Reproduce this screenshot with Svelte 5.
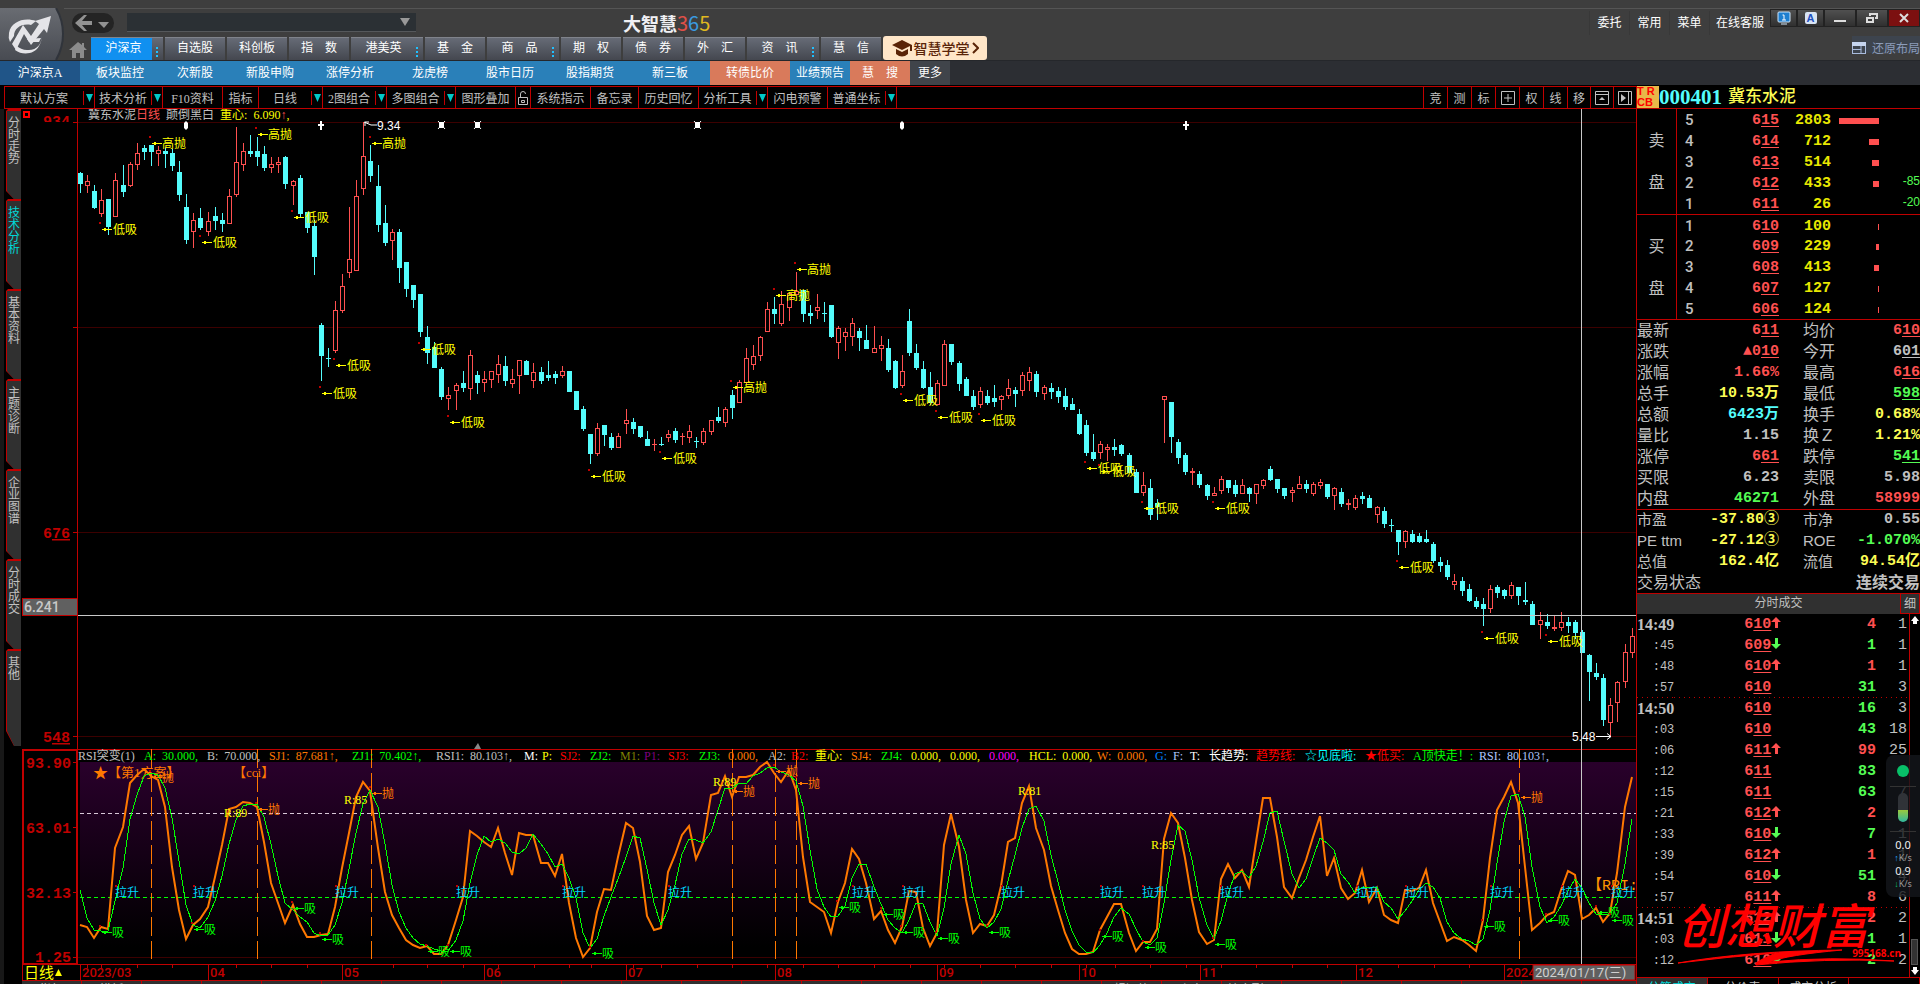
<script lang="ts">
    type NavItem = { text: string; more?: boolean; active?: boolean };

    const mainNav: NavItem[] = [
        {text: '沪深京', more: true, active: true}, {text: '自选股'}, {text: '科创板'}, {text: '指　数'},
        {text: '港美英', more: true}, {text: '基　金'}, {text: '商　品', more: true}, {text: '期　权'},
        {text: '债　券'}, {text: '外　汇'}, {text: '资　讯', more: true}, {text: '慧　信'},
    ];

    const subNav = [
        ['沪深京A', 'current'], ['板块监控', ''], ['次新股', 'mid'], ['新股申购', ''], ['涨停分析', ''],
        ['龙虎榜', ''], ['股市日历', ''], ['股指期货', ''], ['新三板', ''], ['转债比价', 'hot'],
        ['业绩预告', 'short'], ['慧　搜', 'short hot'], ['更多', 'rest'],
    ];

    const tools = [
        {text: '默认方案', w: 90, drop: true}, {text: '技术分析', w: 68, drop: true}, {text: 'F10资料', w: 60},
        {text: '指标', w: 36}, {text: '日线', w: 64, drop: true}, {text: '2图组合', w: 64, drop: true},
        {text: '多图组合', w: 69, drop: true}, {text: '图形叠加', w: 60}, {text: 'lock', w: 15},
        {text: '系统指示', w: 60}, {text: '备忘录', w: 48}, {text: '历史回忆', w: 60},
        {text: '分析工具', w: 69, drop: true}, {text: '闪电预警', w: 60}, {text: '普通坐标', w: 69, drop: true},
    ];
    const rightTools = ['竞', '测', '标', 'grid', '权', '线', '移', 'up', 'next'];
    const sideTabs = ['分时走势', '技术分析', '基本资料', '主题诊断', '企业图谱', '分时成交', '其他'];
    let activeSide = $state('技术分析');

    const sells = [['5', '615', 2803, 40], ['4', '614', 712, 10], ['3', '613', 514, 7], ['2', '612', 433, 6, '-85'], ['1', '611', 26, 0, '-20']];
    const buys = [['1', '610', 100, 1], ['2', '609', 229, 3], ['3', '608', 413, 5], ['4', '607', 127, 1], ['5', '606', 124, 1]];

    // label, value, colour; a leading "_" marks a price with its decimals underlined
    const quote = [
        ['最新', '_611', 'r', '均价', '_610', 'r'],
        ['涨跌', '▲_010', 'r', '今开', '_601', 'w'],
        ['涨幅', '1.66%', 'r', '最高', '_616', 'r'],
        ['总手', '10.53万', 'y', '最低', '_598', 'g'],
        ['总额', '6423万', 'c', '换手', '0.68%', 'y'],
        ['量比', '1.15', 'w', '换Ｚ', '1.21%', 'y'],
        ['涨停', '_661', 'r', '跌停', '_541', 'g'],
        ['买限', '6.23', 'w', '卖限', '5.98', 'w'],
        ['内盘', '46271', 'g', '外盘', '58999', 'r'],
    ];
    const finance = [
        ['市盈', '-37.80③', 'y', '市净', '0.55', 'w'],
        ['PE ttm', '-27.12③', 'y', 'ROE', '-1.070%', 'g'],
        ['总值', '162.4亿', 'y', '流值', '94.54亿', 'y'],
    ];

    const ticks = [
        ['14:49', '610', 'up', 4, 'r', 1], [':45', '609', 'down', 1, 'g', 1], [':48', '610', 'up', 1, 'r', 1],
        [':57', '610', '', 31, 'g', 3], ['14:50', '610', '', 16, 'g', 3], [':03', '610', '', 43, 'g', 18],
        [':06', '611', 'up', 99, 'r', 25], [':12', '611', '', 83, 'g', 6], [':15', '611', '', 63, 'g', 7],
        [':21', '612', 'up', 2, 'r', 9], [':33', '610', 'down', 7, 'g', 1], [':39', '612', 'up', 1, 'r', 1],
        [':54', '610', 'down', 51, 'g', 4], [':57', '611', 'up', 8, 'r', 6], ['14:51', '612', 'up', 2, 'r', 2],
        [':03', '611', 'down', 1, 'g', 1], [':12', '610', 'down', 2, 'g', 2],
    ];

    // One bar per entry: colour, high, body top, body bottom, low
    const bars = `c172 173 184 193,r175 181 186 193,c185 191 208 209,r189 200 214 217,c199 199 227 235,r173 180 217 217,c165 185 192 197,r162 164 186 187,r143 153 165 170,c145 148 152 160
,c145 145 152 166,r146 150 154 166,c147 151 154 168,c149 153 166 171,c161 172 195 201,c194 207 240 244,r213 220 232 248,c208 218 228 230,r212 221 232 236,c207 216 221 230
,c213 220 224 232,r189 196 224 224,r127 162 195 197,r143 151 165 171,c135 151 154 157,c137 151 157 166,c146 154 168 171,r157 164 168 173,r157 162 165 173,c156 157 184 189
,r180 181 186 205,c175 178 214 217,c212 212 228 233,c220 226 257 275,c323 325 356 381,c348 358 359 367,r301 310 351 353,r274 286 311 313,r207 259 273 278,r180 196 271 271
,r122 156 189 195,c145 161 176 182,c165 186 225 232,c205 223 243 246,r229 232 241 260,c229 232 268 283,c262 262 289 297,c285 285 300 308,c294 294 332 337,c326 337 353 364
,c342 347 368 368,c367 369 397 400,r387 395 399 410,r383 385 391 410,c371 383 388 392,r350 355 389 400,c371 375 383 394,r371 379 383 392,r371 371 380 388,r355 364 375 383
,c356 366 381 386,r369 379 384 388,r360 360 376 394,c360 361 375 375,r363 372 381 388,c367 372 381 384,c361 375 378 381,c371 374 378 384,r366 371 376 378,c371 371 392 392
,c391 391 410 410,c406 409 429 431,c434 434 454 464,r423 428 454 456,c425 425 435 446,c433 437 448 450,r433 436 448 448,r409 420 424 434,c418 422 429 434,c426 426 437 438
,c431 439 446 446,r439 444 445 451,c437 444 445 446,r430 434 438 442,c428 431 440 443,r433 436 437 445,r425 431 438 443,c437 441 442 448,r428 431 443 445,r420 420 432 435
,c407 417 421 423,r407 409 423 427,c390 395 408 419,r380 382 403 403,r348 358 383 384,r345 356 365 370,r336 337 356 361,r302 309 332 332,c297 309 314 324,r291 304 324 326
,r292 293 308 321,r272 291 295 295,c290 290 314 322,c305 313 316 324,r294 307 311 319,c302 313 314 322,c305 305 337 338,r326 328 343 359,r328 332 337 351,r318 323 337 346
,c328 331 338 351,c325 340 349 349,r326 348 353 353,r336 345 349 361,c339 348 370 372,c360 361 388 389,r355 371 386 388,c309 321 353 356,c344 353 368 370,c361 369 388 389
,c372 387 403 405,r380 383 405 405,r340 344 386 386,c344 344 362 365,c361 363 384 391,c377 379 396 396,c390 396 407 410,r387 391 405 408,c390 396 403 405,c385 398 402 407
,r395 396 400 410,r379 388 396 399,c387 390 394 407,r372 375 391 396,r367 372 381 391,c371 374 392 397,r385 387 394 400,c383 388 392 399,c387 391 397 403,c388 396 407 410
,c398 404 410 410,c409 414 434 435,c420 425 453 456,c434 452 459 461,r441 444 453 459,r444 447 450 461,c439 447 450 456,c444 445 454 456,c453 455 473 473,c469 472 493 493
,r472 485 493 496,c479 488 515 520,c499 503 507 520,r396 396 400 443,c402 402 437 453,c439 442 458 464,c453 455 472 475,r468 471 473 485,c471 474 485 488,c484 485 496 500
,r487 493 496 496,r476 479 491 494,c480 480 488 493,c480 485 494 497,r479 485 494 494,c487 488 494 502,r484 484 494 504,r479 480 486 489,c466 469 480 481,c479 479 489 493
,c488 488 496 499,r487 490 493 502,r476 484 489 489,c480 484 489 493,r482 484 494 496,r479 482 486 489,c484 484 497 499,r487 488 496 510,c488 492 504 507,r499 503 505 510
,r495 498 508 510,c492 496 499 504,c495 498 508 508,r506 507 515 523,c507 511 524 528,c519 525 526 532,c530 530 542 555,r530 531 542 548,c530 534 542 543,c533 536 542 543
,c530 539 542 543,c542 544 561 563,c557 562 566 572,c560 565 577 580,r574 581 585 590,c577 581 591 596,c584 589 601 602,c597 601 607 609,c598 604 609 626,r585 589 609 613
,c585 587 593 598,c589 590 596 599,r582 585 596 599,c587 587 596 605,c582 600 602 605,c601 604 625 625,r612 620 625 639,c614 622 626 629,r616 627 629 631,r612 622 628 631
,c617 622 626 633,c620 622 633 639,c630 632 653 653,c654 655 672 701,c663 673 677 680,c674 678 720 726,r698 705 723 737,r681 682 703 722,r644 652 682 688,r628 636 653 658`;

    const barX = (i: number) => Math.round(80 + i * 7.085);
    const candles = bars.replace(/\s*\n/g, '').split(',').map((s, i) => {
        const [high, top, bottom, low] = s.slice(1).split(' ').map(Number);
        return {x: barX(i), up: s[0] === 'r', high, top, bottom, low};
    });

    const rsi = [
        925, 927, 938, 927, 929, 848, 827, 783, 775, 769, 776, 780, 807, 867, 910, 939, 925, 919, 907, 877,
        845, 809, 807, 802, 803, 807, 842, 883, 903, 923, 905, 924, 937, 937, 935, 934, 907, 868, 833, 797,
        782, 791, 848, 892, 915, 928, 940, 945, 948, 946, 954, 954, 945, 920, 897, 831, 836, 842, 847, 828,
        853, 875, 833, 835, 835, 863, 863, 876, 854, 903, 938, 957, 948, 912, 889, 890, 857, 823, 828, 862,
        916, 930, 928, 872, 855, 835, 826, 859, 843, 795, 793, 776, 797, 777, 777, 775, 767, 762, 773, 782,
        770, 790, 857, 902, 907, 912, 933, 902, 883, 849, 859, 883, 919, 911, 930, 943, 927, 891, 892, 928,
        946, 933, 845, 814, 847, 900, 933, 924, 926, 915, 886, 842, 838, 803, 786, 828, 850, 886, 910, 933,
        949, 954, 954, 952, 930, 917, 904, 904, 933, 951, 942, 942, 929, 839, 813, 823, 858, 900, 932, 944,
        940, 879, 864, 878, 870, 887, 842, 798, 798, 837, 887, 898, 878, 860, 837, 816, 876, 858, 888, 899,
        893, 870, 902, 888, 915, 920, 923, 890, 891, 888, 870, 903, 922, 941, 937, 940, 945, 951, 920, 858,
        810, 797, 782, 803, 867, 930, 923, 915, 912, 890, 871, 875, 919, 915, 908, 922, 913, 873, 807, 777,
    ];
    // The slow line is the three-bar mean of the fast one
    const slow = rsi.map((v, i) => (i === 0 ? 890 : i === 1 ? 918 : Math.round((v + rsi[i - 1] + rsi[i - 2]) / 3)));
    const line = (ys: number[]) => ys.map((y, i) => `${barX(i)},${y}`).join(' ');

    const highs = [[151, 143], [257, 134], [371, 143], [732, 387], [775, 295], [796, 269]];
    const lows = [
        [101, 229], [201, 242], [293, 217], [335, 365], [321, 393], [420, 349], [449, 422], [590, 476], [661, 458],
        [902, 400], [937, 417], [980, 420], [1086, 468], [1100, 471], [1143, 508], [1214, 508], [1398, 567], [1483, 638], [1547, 641],
    ];
    const rises = [115, 193, 335, 456, 562, 668, 852, 902, 1001, 1100, 1142, 1220, 1356, 1405, 1490, 1561, 1611];
    const absorbs = [
        [101, 932], [193, 929], [293, 908], [321, 939], [427, 951], [449, 951], [591, 953], [838, 907], [882, 914], [902, 932],
        [937, 938], [988, 932], [1101, 936], [1144, 947], [1214, 944], [1483, 926], [1547, 920], [1597, 912], [1611, 920],
    ];
    const throws = [[151, 777], [257, 809], [371, 793], [732, 791], [775, 771], [797, 783], [1520, 797]];
    const peaks: [number, number, string][] = [[224, 817, 'R:89'], [344, 804, 'R:85'], [713, 786, 'R:89'], [1018, 795, 'R:81'], [1151, 849, 'R:85']];
    const signals = [151, 257, 371, 732, 775, 796, 1519];

    const legend: [number, string, string][] = [
        [78, 'RSI突变(1)', '#c0c0c0'], [144, 'A:  30.000,', '#0f0'], [207, 'B:  70.000,', '#c0c0c0'], [269, 'SJ1:  87.681↑,', '#ff7800'],
        [352, 'ZJ1:  70.402↑,', '#0f0'], [436, 'RSI1:  80.103↑,', '#c0c0c0'], [524, 'M:', '#fff'], [542, 'P:', '#ff0'], [560, 'SJ2:', '#f00'],
        [590, 'ZJ2:', '#0f0'], [620, 'M1:', '#808000'], [644, 'P1:', '#800080'], [668, 'SJ3:', '#f00'], [699, 'ZJ3:', '#0f0'],
        [728, '0.000,', '#ff7800'], [768, 'A2:', '#c0c0c0'], [791, 'B2:', '#f00'], [815, '重心:', '#ff0'], [851, 'SJ4:', '#ff7800'],
        [881, 'ZJ4:', '#0f0'], [911, '0.000,', '#ff0'], [950, '0.000,', '#ff0'], [989, '0.000,', '#f0f'], [1029, 'HCL:  0.000,', '#ff0'],
        [1097, 'W:  0.000,', '#ff7800'], [1155, 'G:', '#0080ff'], [1173, 'F:', '#b0c8ff'], [1190, 'T:', '#fff'], [1209, '长趋势:', '#fff'],
        [1256, '趋势线:', '#f00'], [1305, '☆见底啦:', '#0ff'], [1365, '★低买:', '#f00'], [1413, 'A顶快走！:', '#0f0'], [1479, 'RSI:  80.103↑,', '#b0c8ff'],
    ];

    const months: [number, string][] = [
        [80, '2023/03'], [208, '04'], [342, '05'], [484, '06'], [626, '07'], [775, '08'], [937, '09'],
        [1079, '10'], [1200, '11'], [1356, '12'], [1504, '2024'],
    ];
    const weeks = [
        87, 101, 137, 172, 236, 271, 307, 393, 427, 463, 498, 534, 569, 591, 633, 661, 697, 732, 767, 803, 838, 874, 910,
        944, 980, 1015, 1051, 1086, 1115, 1150, 1186, 1221, 1256, 1292, 1327, 1398, 1434, 1469,
    ];
    const strip = ['指标', '模板', ...Array(16).fill(''), '超短势', '主力', '控盘副图', ...Array(6).fill('')];
</script>

{#snippet price(v: string)}{#if v.includes('_')}{v.split('_')[0]}{v.split('_')[1][0]}<u>{v.split('_')[1].slice(1)}</u>{:else}{v}{/if}{/snippet}

{#snippet depth(rows: any[], side: string)}
    <div class="depth">
        <div class="side"><span>{side}</span><span>盘</span></div>
        <div class="levels">
            {#each rows as [n, p, vol, w, diff]}
                <div class="level">
                    <b class="n">{n}</b>
                    <span class="r num">{@render price('_' + p)}</span>
                    <span class="vol num">{vol}</span>
                    <span class="bar"><i style:width="{w}px"></i></span>
                    <span class="diff">{diff ?? ''}</span>
                </div>
            {/each}
        </div>
    </div>
{/snippet}

{#snippet arrow(x: number, y: number)}
    <path d="M{x + 1} {y + .5}h10M{x + 3.5} {y - 1}v3M{x + 4.5} {y - 1}v3" stroke="currentColor" fill="none" shape-rendering="crispEdges" />
    <rect x={x - 2} y={y - 7} width="2" height="2" fill="#c00000" />
{/snippet}

<div class="app">
    <header>
        <a class="logo" href="#home" aria-label="大智慧">
            <svg width="64" height="52" viewBox="0 0 64 52">
                <defs><linearGradient id="lg" x2="0" y2="1"><stop stop-color="#696c72" /><stop offset="1" stop-color="#484b52" /></linearGradient></defs>
                <path d="M0 0h56q7 12 7 26t-7 26H0z" fill="url(#lg)" />
                <path d="M56 0q7 12 7 26t-7 26" fill="none" stroke="#30343b" stroke-width="2" />
                <g fill="#e4e4e8">
                    <path d="M51 8 47 25 44 21 31 37 24 26 16 42 12 36 23 17 31 28 39 16 35 13z" />
                    <path d="M36 13C25 9 11 13 9 25q-1 5 1 9l4-6c0-8 8-13 17-11z" />
                    <path d="M41 27c2 9-5 16-14 15-4 0-8-2-10-4l-2 4c8 6 20 4 24-4 2-3 3-7 2-11z" />
                    <path d="m27 31 14-1-2 4H29z" />
                </g>
            </svg>
        </a>
        <div class="head-main">
            <div class="title-row">
                <button class="back" aria-label="后退">
                    <svg width="42" height="20" viewBox="0 0 42 20"><path d="M3 10 12 2h3l-5 6h10v4H10l5 6h-3z" fill="#929292" /><path d="M26 9h11l-5 6z" fill="#929292" /></svg>
                </button>
                <div class="search">
                    <input type="text" aria-label="搜索" />
                    <button aria-label="展开"><svg width="10" height="8"><path d="M0 0h10L5 8z" fill="#999" /></svg></button>
                </div>
                <h1>大智慧<span class="d3">3</span><span class="d6">6</span><span class="d5">5</span></h1>
                <nav class="menu">
                    <a href="#trade">委托</a><a href="#common">常用</a><a href="#menu">菜单</a><a class="wide" href="#service">在线客服</a>
                </nav>
                <div class="win">
                    <button class="sm" aria-label="屏幕"><svg width="14" height="14"><rect x="1" y="1" width="12" height="10" rx="1" fill="#1e7fd0" stroke="#cfe6fa" /><path d="M5.500 4H7v5M5 9h4" stroke="#fff" fill="none" /><path d="M4 13h6" stroke="#cfe6fa" /></svg></button>
                    <button class="sm" aria-label="字体"><span class="glyph">A</span></button>
                    <button aria-label="最小化"><svg width="12" height="10"><path d="M0 8h12" stroke="#ddd" stroke-width="2" /></svg></button>
                    <button aria-label="还原"><svg width="12" height="10"><path d="M4 3V1h7v4H9M1 5h6v4H1z" stroke="#ddd" fill="none" stroke-width="2" /></svg></button>
                    <button class="close" aria-label="关闭"><svg width="10" height="10"><path d="m1 1 8 8m0-8-8 8" stroke="#ddd" stroke-width="2" /></svg></button>
                </div>
            </div>
            <div class="nav-row">
                <a class="home" href="#index" aria-label="首页">
                    <svg width="18" height="16"><path d="M9 0 0 8h3v8h4v-5h4v5h4V8h3l-3-3V1h-2v2z" fill="#8c8c8c" /></svg>
                </a>
                <nav class="main-nav">
                    {#each mainNav as item}
                        <a href="#nav" class:active={item.active} class:more={item.more}><span>{item.text}</span>{#if item.more}<i aria-hidden="true"></i>{/if}</a>
                    {/each}
                </nav>
                <button class="school">
                    <svg width="20" height="18"><path d="M10 1 0 6l10 5 8-4v5h2V6z" fill="#5a2408" /><path d="M4 10v5q6 5 12 0v-5l-6 3z" fill="#5a2408" /></svg>
                    智慧学堂<svg width="7" height="12"><path d="m1 1 5 5-5 5" fill="none" stroke="#5a2408" stroke-width="2" /></svg>
                </button>
                <button class="restore">
                    <svg width="14" height="12"><rect x=".5" y=".5" width="13" height="11" fill="none" stroke="#a9bbdc" /><rect width="14" height="4" fill="#c5d4ee" /><path d="M1 7.500h8V4M9 11V7" stroke="#a9bbdc" fill="none" /></svg>
                    还原布局
                </button>
            </div>
        </div>
    </header>

    <nav class="sub-nav">
        {#each subNav as [text, kind]}
            <a class={kind} href="#sub">{text}</a>
        {/each}
    </nav>

    <main>
        <section class="work">
            <div class="toolbar">
                {#each tools as t}
                    <button style:width="{t.w}px">
                        {#if t.text === 'lock'}
                            <svg class="lock" width="12" height="16" role="img" aria-label="锁定"><path d="M3.500 7V4q0-2.500 2.500-2.500T8.500 4M1.500 7.500h9v7h-9zM4.500 10.500h3v2h-3z" fill="none" stroke="#c0c0c0" /></svg>
                        {:else}
                            <span>{t.text}</span>
                        {/if}
                        {#if t.drop}<i><svg width="7" height="8"><path d="M0 0h7L3.500 8z" fill="#00c8c8" /></svg></i>{/if}
                    </button>
                {/each}
                <div class="right-tools">
                    {#each rightTools as t}
                        <button aria-label={t}>
                            {#if t === 'grid'}
                                <svg width="14" height="14"><path d="M.5.500h13v13H.5zM3 7h8M7 3v8" fill="none" stroke="#c0c0c0" /></svg>
                            {:else if t === 'up'}
                                <svg width="14" height="14"><path d="M.5.500h13v13H.5zM0 3.500h14" fill="none" stroke="#c0c0c0" /><path d="M4 9h6L7 6z" fill="#c0c0c0" /></svg>
                            {:else if t === 'next'}
                                <svg width="14" height="14"><path d="M.5.500h13v13H.5zM10.500 0v14" fill="none" stroke="#c0c0c0" /><path d="M3 3v8l5-4z" fill="#c0c0c0" /></svg>
                            {:else}{t}{/if}
                        </button>
                    {/each}
                </div>
            </div>

            <div class="body">
                <div class="side-tabs">
                    {#each sideTabs as t}
                        <button class:active={activeSide === t} onclick={() => (activeSide = t)}><span>{t}</span></button>
                    {/each}
                </div>

                <div class="charts">
                    <div class="chart-head">
                        <div class="axis-top"><i></i><span>9<u>34</u></span></div>
                        <p>冀东水泥<span class="r">日线</span>&nbsp; 颠倒黑白 &nbsp;<span class="hy">重心:&nbsp; 6.090</span><span class="r">↑</span><span class="hy">,</span></p>
                        <i class="cross"></i>
                    </div>

                    <svg class="plot" viewBox="22 122 1614 627" role="img" aria-label="冀东水泥日线">
                        <g shape-rendering="crispEdges">
                            {#each [122, 327, 532, 736] as y}
                                <path d="M78 {y + .5}H1636" stroke="#3c0000" />
                                <path d="M73 {y + .5}h5" stroke="#c00000" />
                            {/each}
                            {#each candles as c}
                                <path d="M{c.x + .5} {c.high}V{c.low}" stroke={c.up ? '#ff5050' : '#54fcfc'} />
                                {#if c.bottom - c.top < 2}
                                    <path d="M{c.x - 2} {c.top + .5}h5" stroke={c.up ? '#ff5050' : '#54fcfc'} />
                                {:else if c.up}
                                    <rect x={c.x - 1.5} y={c.top + .5} width="4" height={c.bottom - c.top - 1} fill="#000" stroke="#ff5050" />
                                {:else}
                                    <rect x={c.x - 2} y={c.top} width="5" height={c.bottom - c.top} fill="#54fcfc" />
                                {/if}
                            {/each}
                            <path d="M77.500 122V749M22 749.500H1636" stroke="#c00000" fill="none" />
                            <path d="M78 615.500H1636M1581.500 122V749" stroke="#c8c8c8" fill="none" />
                            <rect x="22.5" y="598.5" width="55" height="17" fill="#606060" stroke="#c00000" />
                        </g>
                        <text class="tag" x="24" y="612">6.241</text>
                        <g class="axis">
                            <text x="70" y="538">6<tspan text-decoration="underline">76</tspan></text>
                            <text x="70" y="742">5<tspan text-decoration="underline">48</tspan></text>
                        </g>
                        <g fill="#fff">
                            {#each [186, 902] as x}<path d="M{x} 121l2 2v5l-2 2-2-2v-5z" />{/each}
                            {#each [321, 1186] as x}<path d="M{x - 1} 121h2v3h2v2h-2v4h-2v-4h-2v-2h2z" />{/each}
                            {#each [441, 477, 697] as x}
                                <rect x={x - 2} y="122" width="5" height="6" /><path d="M{x - 3} 121l7 8m0-8-7 8" stroke="#fff" />
                            {/each}
                            <path d="M364 122l7 3h6M365 126v-4h4M1596 736.500h15m-4-3 4 3-4 3" fill="none" stroke="#fff" />
                            <text x="377" y="130" class="white">9.34</text>
                            <text x="1572" y="741" class="white">5.48</text>
                        </g>
                        <g color="#ff0" fill="#ff0">
                            {#each highs as [x, y]}{@render arrow(x, y)}<text x={x + 11} y={y + 5}>高抛</text>{/each}
                            {#each lows as [x, y]}{@render arrow(x, y)}<text x={x + 12} y={y + 5}>低吸</text>{/each}
                        </g>
                        <path d="M474 749l4-6 3 6z" fill="#888" />
                    </svg>

                    <svg class="plot" viewBox="22 749 1614 215" role="img" aria-label="RSI突变">
                        <defs>
                            <linearGradient id="night" x2="0" y2="1"><stop stop-color="#29002b" /><stop offset=".95" stop-color="#000" /></linearGradient>
                        </defs>
                        <rect x="80" y="762" width="1556" height="195" fill="url(#night)" />
                        <g shape-rendering="crispEdges" fill="none">
                            <path d="M78 957.500H1636" stroke="#3c0000" />
                            <path d="M80 813.500H1636" stroke="#d8c8d8" stroke-dasharray="4 3" />
                            <path d="M80 897.500H1636" stroke="#0f0" stroke-dasharray="4 3" />
                            {#each signals as x}<path d="M{x + .5} 749V959" stroke="#ff7800" stroke-dasharray="19 5" />{/each}
                            <path d="M73 762.500h5M73 827.500h5M73 892.500h5M73 957.500h5" stroke="#c00000" />
                            <rect x="23" y="750" width="54" height="214" stroke="#c00000" stroke-width="2" />
                            <path d="M1581.500 749V964" stroke="#c8c8c8" />
                        </g>
                        <g class="axis">
                            <text x="71" y="768">93.90</text><text x="71" y="833">63.01</text><text x="71" y="898">32.13</text><text x="71" y="962">1.25</text>
                        </g>
                        {#each legend as [x, text, color]}<text {x} y="760" fill={color} class="legend">{text}</text>{/each}
                        <g fill="#ff7800"><text x="93" y="778" class="star">★</text><text class="plan" x="108" y="777">【第1方案】</text><text class="plan" x="233" y="777">【cci】</text></g>
                        <text x="1587" y="890" class="rri">【RRI:</text>
                        <polyline points={line(rsi)} fill="none" stroke="#ff7800" stroke-width="2" />
                        <polyline points={line(slow)} fill="none" stroke="#0f0" shape-rendering="crispEdges" />
                        <g fill="#00d8ff">
                            {#each rises as x}<text {x} y="897">拉升</text><rect {x} y="885" width="2" height="2" fill="#c00000" />{/each}
                        </g>
                        <g color="#0f0" fill="#0f0">{#each absorbs as [x, y]}{@render arrow(x, y)}<text x={x + 11} y={y + 5}>吸</text>{/each}</g>
                        <g color="#ff7800" fill="#ff7800">{#each throws as [x, y]}{@render arrow(x, y)}<text x={x + 11} y={y + 5}>抛</text>{/each}</g>
                        {#each peaks as [x, y, text]}<text {x} {y} fill="#ff0" class="legend">{text}</text>{/each}
                    </svg>

                    <svg class="plot" viewBox="22 964 1614 17" role="img" aria-label="日期">
                        <g shape-rendering="crispEdges" stroke="#c00000" fill="none">
                            <path d="M22 964.500H1636M22 980.500H1636M22.500 964v17M80.500 964v17" />
                            {#each months as [x]}<path d="M{x + .5} 965v15" />{/each}
                            {#each weeks as x}<path d="M{x + .5} 965v3" />{/each}
                        </g>
                        <text x="24" y="978" class="period">日线</text><path d="M55 976h7l-3.500-7z" fill="#ff0" />
                        {#each months as [x, text]}<text x={x + 2} y="977" class="month">{text}</text>{/each}
                        <rect x="1533" y="965" width="102" height="15" fill="#606060" stroke="#c00000" />
                        <text x="1535" y="977" class="date">2024/01/17(三)</text>
                    </svg>

                    <div class="strip">{#each strip as t}<button>{t}</button>{/each}</div>
                </div>
            </div>
        </section>

        <aside>
            <div class="stock"><span class="badge">T R<br />CB</span><span class="code">000401</span><strong>冀东水泥</strong></div>
            {@render depth(sells, '卖')}
            {@render depth(buys, '买')}
            {#each [quote, finance] as rows, k}
                <div class="quote" class:last={k === 1}>
                    {#each rows as [a, av, ac, b, bv, bc]}
                        <div class="pair">
                            <span class="label">{a}</span><span class="num {ac}">{@render price(av)}</span>
                            <span class="label second">{b}</span><span class="num {bc}">{@render price(bv)}</span>
                        </div>
                    {/each}
                    {#if k === 1}<div class="state"><span>交易状态</span><b>连续交易</b></div>{/if}
                </div>
            {/each}
            <div class="tick-head"><span>分时成交</span><button>细</button></div>
            <div class="ticks">
                <table>
                    <tbody>
                        {#each ticks as [time, p, dir, vol, color, count], i}
                            <tr class:dotted={i === 3 || i === 13}>
                                <td class="time" class:minute={String(time).length > 3}>{time}</td>
                                <td class="tp r">{@render price('_' + p)}{#if dir}<svg class={dir === 'up' ? '' : 'g'} width="10" height="11"><path d={dir === 'up' ? 'M5 0l5 5H7v6H4V5H0z' : 'M5 11l5-5H7V0H4v6H0z'} fill="currentColor" /></svg>{/if}</td>
                                <td class="tv {color}">{vol}</td>
                                <td class="tc">{count}</td>
                            </tr>
                        {/each}
                    </tbody>
                </table>
                <div class="scroll">
                    <button aria-label="上"><svg width="8" height="8"><path d="M4 0l4 5H6v3H2V5H0z" fill="#fff" /></svg></button>
                    <i></i>
                    <button aria-label="下"><svg width="8" height="8"><path d="M4 8l4-5H6V0H2v3H0z" fill="#fff" /></svg></button>
                </div>
                <div class="mark">
                    <span>创想财富</span>
                    <svg width="220" height="20" viewBox="0 0 220 20"><path d="M1 16Q70 4 165 3 110 8 92 15q60-6 125-1-70-3-138 4-4-2 20-12Q50 10 1 16z" fill="red" stroke="red" /></svg>
                    <em>995168.cn</em>
                </div>
                <div class="net">
                    <b class="dot"></b><hr /><b class="pill"></b><hr />
                    <span>0.0</span><small><i class="up">↑</i>K/s</small>
                    <span>0.9</span><small><i class="down">↓</i>K/s</small>
                </div>
            </div>
            <div class="bottom-tabs"><button class="active">分笔成交</button><button>分价表</button><button>成交分析</button><button aria-label="更多"></button></div>
        </aside>
    </main>
</div>

<style>
    :global(body) {
        margin: 0;
        background: #000;
    }

    .app {
        --red: #c00000;
        height: 100vh;
        display: flex;
        flex-direction: column;
        overflow: hidden;
        background: #000;
        color: #c0c0c0;
        font-family: "Liberation Serif", "Noto Sans CJK SC", sans-serif;
        font-size: 12px;
    }

    button, input {
        font: inherit;
        color: inherit;
        background: none;
        border: 0;
        padding: 0;
        margin: 0;
    }

    button {
        cursor: pointer;
        white-space: nowrap;
    }

    a {
        color: inherit;
        text-decoration: none;
    }

    svg {
        display: block;
        flex: none;
    }

    .r { color: #ff5050; }
    .g { color: #54fc54; }
    .y { color: #fcfc54; }
    .c { color: #54fcfc; }
    .w { color: #c0c0c0; }

    /* Window header */
    header {
        display: flex;
        flex: none;
        height: 52px;
        padding-top: 8px;
        background: #3e3e3e;
        border-bottom: 1px solid #25272b;
        color: #fff;
    }

    .head-main {
        flex: 1;
        min-width: 0;
        border-top: 1px solid #555;
    }

    .title-row {
        display: flex;
        align-items: center;
        height: 27px;
        padding-left: 8px;
    }

    .back {
        background: #242424;
        border-radius: 10px;
    }

    .search {
        display: flex;
        align-items: center;
        width: 289px;
        height: 18px;
        margin-left: 13px;
        background: #2b3034;
        border-bottom: 1px solid #55585b;
    }

    .search input {
        flex: 1;
        min-width: 0;
    }

    .search button {
        padding: 0 6px;
    }

    h1 {
        display: flex;
        align-items: center;
        margin: 0 auto 0 207px;
        font: bold 18px/24px "Noto Sans CJK SC", sans-serif;
        color: #f0f0f4;
    }

    h1 span {
        font-size: 20px;
        font-weight: 400;
    }

    .d3 { color: #e05048; }
    .d6 { color: #3a9ae0; }
    .d5 { color: #e0b820; }

    .menu {
        display: flex;
    }

    .menu a {
        width: 39px;
        line-height: 24px;
        text-align: center;
        border-left: 1px solid #383838;
    }

    .menu .wide {
        width: 60px;
    }

    .win {
        display: flex;
        align-self: flex-start;
    }

    .win button {
        display: flex;
        align-items: center;
        justify-content: center;
        width: 32px;
        height: 18px;
        background: linear-gradient(#505050, #303030);
        border: 1px solid #222;
        box-sizing: border-box;
    }

    .win .sm {
        width: 27px;
    }

    .win .close {
        background: #7c1010;
    }

    .glyph {
        width: 12px;
        font: bold 11px/12px "Liberation Sans", sans-serif;
        color: #2050c0;
        background: #d8e4f4;
        border-radius: 2px;
    }

    .nav-row {
        display: flex;
        height: 24px;
    }

    .home {
        display: flex;
        align-items: center;
        justify-content: center;
        width: 27px;
        padding-top: 4px;
    }

    .main-nav {
        display: flex;
        padding-top: 1px;
    }

    .main-nav a {
        display: flex;
        width: 60px;
        margin-right: 2px;
        line-height: 21px;
        text-align: center;
        background: linear-gradient(#666b76, #44474f);
        border-top: 1px solid #80838b;
    }

    .main-nav a span {
        flex: 1;
    }

    .main-nav a.more {
        width: 72px;
    }

    .main-nav a.more i {
        width: 2px;
        height: 10px;
        margin: 9px 5px 0 0;
        background: repeating-linear-gradient(#20c0ff 0 2px, transparent 2px 4px);
    }

    .main-nav a.active {
        gap: 4px;
    }

    .main-nav a.active span {
        padding-left: 4px;
        background: #1090f0;
    }

    .school {
        display: flex;
        align-items: center;
        justify-content: center;
        gap: 2px;
        width: 104px;
        background: #ffe6c8;
        color: #5a2408;
        border-radius: 3px;
        font-size: 14px;
        font-weight: 500;
    }

    .restore {
        display: flex;
        align-items: center;
        gap: 6px;
        margin-left: auto;
        padding-top: 7px;
        height: 17px;
        color: #8c9cba;
        background: #3d444e;
    }

    .sub-nav {
        display: flex;
        flex: none;
        height: 24px;
        margin-bottom: 1px;
        background: #2c2e33;
        color: #fff;
        line-height: 24px;
        text-align: center;
    }

    .sub-nav a {
        width: 80px;
        background: #2a80b9;
    }

    .sub-nav .mid { width: 70px; }
    .sub-nav .current { background: #205588; }
    .sub-nav .short { width: 60px; }
    .sub-nav .hot { background: #d97a5b; }

    .sub-nav .rest {
        width: 40px;
        background: #40444a;
    }

    /* Workspace */
    main {
        display: grid;
        grid-template-columns: minmax(0, 1fr) 284px;
        flex: 1;
        min-height: 0;
    }

    .work {
        display: flex;
        flex-direction: column;
        min-height: 0;
    }

    .toolbar {
        display: flex;
        height: 21px;
        margin-left: 4px;
        border: 1px solid var(--red);
        border-right: 0;
    }

    .toolbar button {
        display: flex;
        align-items: center;
        justify-content: center;
        flex: none;
        box-sizing: border-box;
        border-right: 1px solid var(--red);
    }

    .toolbar span {
        flex: 1;
    }

    .toolbar i {
        display: flex;
        align-items: center;
        justify-content: center;
        width: 10px;
        height: 14px;
        border-left: 1px solid var(--red);
    }

    .right-tools {
        display: flex;
        margin-left: auto;
    }

    .right-tools button {
        width: 24px;
        border-right: 0;
        border-left: 1px solid var(--red);
    }

    .right-tools button:nth-last-child(-n + 3) {
        width: 23px;
    }

    .body {
        display: flex;
        flex: 1;
        min-height: 0;
    }

    .side-tabs {
        width: 22px;
        flex: none;
        box-sizing: border-box;
        padding-left: 6px;
        background: linear-gradient(90deg, #181818 4px, #000 4px);
    }

    .side-tabs button {
        display: block;
        width: 15px;
        height: 90px;
        padding-left: 1px;
        background: var(--red);
        clip-path: polygon(0 2px, 2px 0, 100% 0, 100% 100%, 8px 100%, 0 82px);
    }

    .side-tabs button:last-child {
        height: 97px;
    }

    .side-tabs span {
        display: block;
        height: 100%;
        margin-top: 2px;
        padding: 6px 1px 0;
        box-sizing: border-box;
        line-height: 12px;
        white-space: normal;
        word-break: break-all;
        background: #303030;
        clip-path: polygon(0 0, 100% 0, 100% 100%, 8px 100%, 0 80px);
    }

    .side-tabs .active {
        color: #00d8d8;
    }

    .charts {
        flex: 1;
        min-width: 0;
    }

    .chart-head {
        display: flex;
        position: relative;
        height: 13px;
        overflow: hidden;
        line-height: 13px;
    }

    .axis-top {
        display: flex;
        width: 55px;
        border-right: 1px solid var(--red);
        color: var(--red);
        font: bold 15px/17px "Liberation Mono", monospace;
    }

    .axis-top i {
        width: 3px;
        height: 3px;
        margin: 2px 0 0 1px;
        border: 2px solid #f00;
    }

    .axis-top span {
        margin: 5px 7px 0 auto;
    }

    .chart-head p {
        margin: 0 0 0 10px;
        white-space: nowrap;
    }

    .hy {
        color: #ff0;
    }

    .cross {
        position: absolute;
        right: 54px;
        width: 1px;
        height: 100%;
        background: #c8c8c8;
    }

    .plot {
        width: 100%;
        height: auto;
        overflow: visible;
        font-size: 12px;
    }

    .axis {
        fill: var(--red);
        font: bold 15px "Liberation Mono", monospace;
        text-anchor: end;
    }

    .tag {
        fill: #c8c8c8;
        font: 500 14px Roboto, sans-serif;
    }

    .white {
        font: 12px "Liberation Sans", sans-serif;
    }

    .legend {
        font-size: 12px;
        white-space: pre;
    }

    .star {
        font-size: 15px;
    }

    .plan {
        font-size: 13px;
    }

    .rri {
        fill: #ff9400;
        font: 15px "Liberation Mono", "Noto Sans CJK SC", monospace;
    }

    .period {
        fill: #ff0;
        font-size: 15px;
    }

    .month {
        fill: var(--red);
        font: 500 13px Roboto, sans-serif;
    }

    .date {
        fill: #d0d0d0;
        font: 13px Roboto, "Noto Sans CJK SC", sans-serif;
    }

    .strip {
        display: flex;
        position: relative;
        background: #303030;
        overflow: hidden;
    }

    .strip button {
        width: 60px;
        flex: none;
        height: 18px;
        line-height: 12px;
        box-sizing: border-box;
        border-right: 1px solid var(--red);
    }

    /* Quote panel */
    aside {
        position: relative;
        display: flex;
        flex-direction: column;
        min-height: 0;
        border-left: 1px solid var(--red);
        box-sizing: border-box;
        background: #000;
        font-size: 16px;
    }

    .stock {
        display: flex;
        align-items: center;
        flex: none;
        height: 22px;
        border-bottom: 1px solid var(--red);
    }

    .badge {
        width: 22px;
        height: 22px;
        background: #e8b848;
        color: #f00;
        font: bold 11px/11px "Liberation Sans", sans-serif;
        white-space: nowrap;
    }

    .code {
        color: #54fcfc;
        font-size: 21px;
        font-weight: bold;
    }

    .stock strong {
        margin-left: 6px;
        color: #fcfc54;
        font-size: 17px;
        font-weight: 500;
        line-height: 22px;
    }

    .num {
        font-family: "Liberation Mono", "Noto Sans CJK SC", monospace;
        font-size: 15px;
        font-weight: bold;
        text-align: right;
    }

    u {
        text-decoration-thickness: 1px;
        text-underline-offset: 2px;
    }

    .depth {
        display: flex;
        flex: none;
        border-bottom: 1px solid var(--red);
    }

    .side {
        display: flex;
        flex-direction: column;
        align-items: center;
        gap: 18px;
        width: 40px;
        padding: 20px 0 0;
        border-right: 1px solid var(--red);
        box-sizing: border-box;
        line-height: 24px;
    }

    .levels {
        flex: 1;
    }

    .level {
        display: grid;
        grid-template-columns: 8px 1fr 52px 48px 41px;
        height: 21px;
        padding-left: 8px;
        line-height: 23px;
    }

    .depth:nth-of-type(3) .level:first-child {
        height: 20px;
    }

    .n {
        font: 500 15px/23px Roboto, sans-serif;
    }

    .vol {
        color: #e8e800;
    }

    .bar {
        display: flex;
        align-items: center;
        justify-content: flex-end;
    }

    .bar i {
        height: 6px;
        background: #ff5050;
    }

    .diff {
        color: #54fc54;
        font: 12px/18px "Liberation Sans", sans-serif;
        text-align: right;
    }

    .quote {
        flex: none;
        border-bottom: 1px solid var(--red);
    }

    .pair {
        display: grid;
        grid-template-columns: 50px 92px 24px 1fr;
        height: 21px;
        line-height: 22px;
        white-space: nowrap;
    }

    .quote.last .pair, .state {
        height: 20px;
        margin-bottom: 1px;
        line-height: 20px;
    }

    .pair .second {
        margin-left: 24px;
    }

    .label {
        font-family: "Liberation Sans", "Noto Sans CJK SC", sans-serif;
        font-size: 16px;
    }

    .quote.last .label {
        font-size: 15px;
    }

    .quote.last .state {
        margin-bottom: 0;
    }

    .state {
        display: flex;
        justify-content: space-between;
    }

    .tick-head {
        display: flex;
        flex: none;
        height: 20px;
        line-height: 18px;
        font-size: 12px;
        background: #303030;
    }

    .tick-head span {
        flex: 1;
        text-align: center;
        padding-left: 20px;
    }

    .tick-head button {
        width: 20px;
        border: 1px solid var(--red);
        border-top: 0;
        box-sizing: border-box;
    }

    .ticks {
        position: relative;
        display: flex;
        flex: 1;
        min-height: 0;
    }

    table {
        flex: 1;
        align-self: flex-start;
        border-collapse: collapse;
        table-layout: fixed;
    }

    td {
        height: 21px;
        padding: 0;
        line-height: 19px;
        text-align: right;
        font-family: "Liberation Mono", monospace;
        font-size: 15px;
        font-weight: bold;
        white-space: nowrap;
    }

    .dotted td {
        background: repeating-linear-gradient(90deg, var(--red) 0 1px, transparent 1px 5px) bottom / 100% 1px no-repeat;
    }

    td.time {
        width: 37px;
        font: 12px "Liberation Mono", monospace;
    }

    td.minute {
        font: bold 16px "Liberation Serif", serif;
    }

    td.tp {
        width: 109px;
        padding-left: 70px;
        box-sizing: border-box;
        text-align: left;
    }

    td.tp svg {
        display: inline-block;
    }

    td.tv {
        width: 93px;
    }

    td.tc {
        width: 31px;
        font-weight: normal;
    }

    .scroll {
        display: flex;
        flex-direction: column;
        width: 10px;
        margin-left: 2px;
        border-left: 1px solid var(--red);
    }

    .scroll button {
        padding: 2px 1px;
    }

    .scroll i {
        width: 7px;
        height: 26px;
        margin: auto 0 0 1px;
        background: #333;
        border: 1px solid #555;
        box-sizing: border-box;
    }

    .mark {
        position: absolute;
        left: 40px;
        bottom: 10px;
        width: 224px;
        color: red;
    }

    .mark span {
        font: italic 500 48px/56px "Noto Sans CJK SC", sans-serif;
    }

    .mark svg {
        margin-top: -4px;
    }

    .mark em {
        position: absolute;
        right: 0;
        bottom: 8px;
        font: normal bold 10px/12px "Open Sans", sans-serif;
    }

    .net {
        position: absolute;
        right: 0;
        top: 141px;
        display: flex;
        flex-direction: column;
        align-items: center;
        width: 34px;
        height: 142px;
        padding-top: 10px;
        box-sizing: border-box;
        border-radius: 8px 0 0 8px;
        background: #14161ccc;
        color: #eee;
        font: 11px/14px "Noto Sans", sans-serif;
    }

    .net hr {
        width: 26px;
        margin: 9px 0 6px;
        border: 0;
        border-top: 1px solid #333;
    }

    .dot {
        width: 12px;
        height: 12px;
        border-radius: 50%;
        background: #08c068;
    }

    .pill {
        width: 10px;
        height: 29px;
        border-radius: 5px;
        background: linear-gradient(#303338 60%, #98c840 60%, #30b8a0);
    }

    .net small {
        font-size: 9px;
        line-height: 12px;
        color: #999;
    }

    .net i {
        font-style: normal;
    }

    .net .up { color: #20a0ff; }
    .net .down { color: #08c068; }

    .bottom-tabs {
        display: flex;
        flex: none;
        height: 6px;
        overflow: hidden;
        border-top: 1px solid var(--red);
        font-size: 12px;
    }

    .bottom-tabs button {
        width: 84px;
        height: 20px;
        line-height: 18px;
        box-sizing: border-box;
        border-right: 1px solid var(--red);
    }

    .bottom-tabs .active {
        background: #303030;
        color: #00d8d8;
    }
</style>
